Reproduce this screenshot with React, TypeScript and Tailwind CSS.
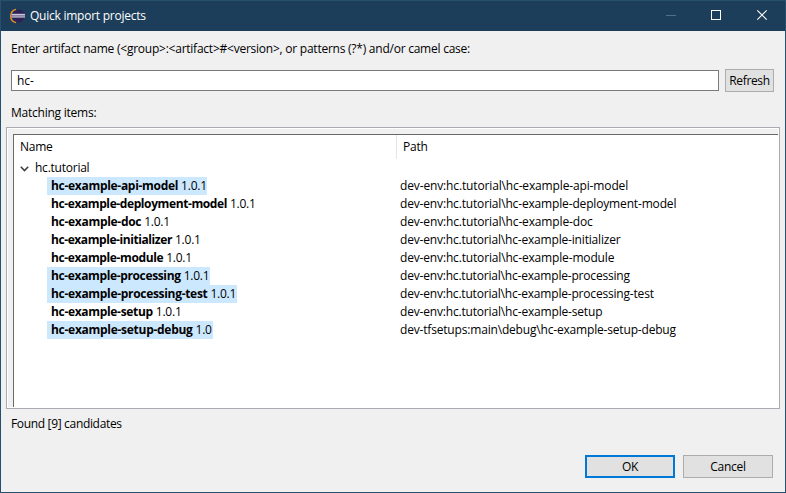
const rows = [
  { name: "hc-example-api-model", version: "1.0.1", path: "dev-env:hc.tutorial\\hc-example-api-model", selected: true, width: "w-[160px]", tracking: "tracking-[-0.3px]", pathTracking: "tracking-[-0.14px]" },
  { name: "hc-example-deployment-model", version: "1.0.1", path: "dev-env:hc.tutorial\\hc-example-deployment-model", selected: false, width: "w-[208px]", tracking: "tracking-[-0.4px]", pathTracking: "tracking-[-0.16px]" },
  { name: "hc-example-doc", version: "1.0.1", path: "dev-env:hc.tutorial\\hc-example-doc", selected: false, width: "w-[122px]", tracking: "tracking-[-0.3px]", pathTracking: "tracking-[-0.15px]" },
  { name: "hc-example-initializer", version: "1.0.1", path: "dev-env:hc.tutorial\\hc-example-initializer", selected: false, width: "w-[153px]", tracking: "tracking-[-0.42px]", pathTracking: "tracking-[-0.18px]" },
  { name: "hc-example-module", version: "1.0.1", path: "dev-env:hc.tutorial\\hc-example-module", selected: false, width: "w-[144px]", tracking: "tracking-[-0.38px]", pathTracking: "tracking-[-0.16px]" },
  { name: "hc-example-processing", version: "1.0.1", path: "dev-env:hc.tutorial\\hc-example-processing", selected: true, width: "w-[163px]", tracking: "tracking-[-0.36px]", pathTracking: "tracking-[-0.19px]" },
  { name: "hc-example-processing-test", version: "1.0.1", path: "dev-env:hc.tutorial\\hc-example-processing-test", selected: true, width: "w-[190px]", tracking: "tracking-[-0.31px]", pathTracking: "tracking-[-0.19px]" },
  { name: "hc-example-setup", version: "1.0.1", path: "dev-env:hc.tutorial\\hc-example-setup", selected: false, width: "w-[133px]", tracking: "tracking-[-0.32px]", pathTracking: "tracking-[-0.18px]" },
  { name: "hc-example-setup-debug", version: "1.0", path: "dev-tfsetups:main\\debug\\hc-example-setup-debug", selected: true, width: "w-[166px]", tracking: "tracking-[-0.28px]", pathTracking: "tracking-[-0.18px]" },
];

function EclipseIcon() {
  return (
    <svg width="16" height="16" viewBox="0 0 16 16" className="mr-[-1px] shrink-0">
      <circle cx="9.3" cy="8" r="6.5" fill="#2c2255" />
      <path d="M7 1.3C3.6 2.2 1.7 4.9 1.7 8S3.6 13.8 7 14.7" fill="none" stroke="#f7941e" strokeWidth="1.3" />
      <rect x="3" y="5.2" width="12.6" height="1" fill="#54497f" />
      <rect x="2.5" y="6" width="13.5" height="1" fill="#c9c6d8" />
      <rect x="2.5" y="7" width="13.5" height="1.5" fill="#8b84a8" />
      <rect x="2.5" y="8.5" width="13.5" height="1" fill="#e1dfe9" />
    </svg>
  );
}

export default function App() {
  return (
    <div className="flex h-[493px] w-[786px] flex-col overflow-hidden whitespace-nowrap border border-[#27506f] bg-[#f0f0f0] font-['Open_Sans','Noto_Sans',sans-serif] text-[12px] leading-[18px] tracking-[-0.24px] text-black">
      <header className="flex h-[30px] shrink-0 items-center bg-[#1c3e5a] pl-2 text-white">
        <EclipseIcon />
        <span className="ml-[6px]">Quick import projects</span>
        <svg width="120" height="30" viewBox="0 0 120 30" className="ml-auto mr-[5px]" fill="none">
          <path d="M6 14.5H16" stroke="#536f84" />
          <rect x="51.5" y="9.5" width="9" height="9" stroke="#fff" />
          <path d="M97.3 9.3L106.7 18.7M106.7 9.3L97.3 18.7" stroke="#fff" strokeWidth="1.1" />
        </svg>
      </header>

      <label className="ml-[10px] mt-[9px] h-[18px]">
        <span>{"Enter artifact name (<group>:<artifact>#<version>, or patterns (?*) and/or camel case:"}</span>
      </label>
      <div className="ml-[10px] mt-[11px] flex h-[23px] gap-[6px]">
        <div className="my-[1px] flex w-[708px] items-center border border-[#7a7a7a] bg-white pl-[5px]">
          <span className="tracking-normal">hc-</span>
        </div>
        <button className="flex w-[49px] items-center justify-center border border-[#adadad] bg-[#e1e1e1] tracking-[-0.35px]">
          <span>Refresh</span>
        </button>
      </div>
      <div className="ml-[10px] mt-[12px] h-[18px]">
        <span>Matching items:</span>
      </div>

      <section className="ml-[5px] mt-[5px] flex h-[282px] w-[774px] shrink-0 flex-col border border-[#a9abb3] bg-white p-px">
        <div className="flex h-[279px] flex-col border-l-[5px] border-t-[5px] border-[#f0f0f0] bg-white">
          <div className="flex h-[273px] flex-1 flex-col border-l border-t border-[#69696b]">
            <div className="flex h-[24px] shrink-0">
              <div className="flex w-[383px] items-center border-r border-[#e5e5e5] pl-[6px]"><span>Name</span></div>
              <div className="flex items-center pl-[6px]"><span>Path</span></div>
            </div>
            <div className="flex h-[18px] pl-[6px]">
              <svg width="9" height="6" viewBox="0 0 9 6" fill="none" className="mr-[6px] mt-[7px]">
                <path d="M0.8 0.8L4.5 4.5L8.2 0.8" stroke="#404040" strokeWidth="1.6" />
              </svg>
              <span>hc.tutorial</span>
            </div>
            {rows.map((r) => (
              <div key={r.path} className="flex h-[18px]">
                <div className="w-[386px] pl-[33px]">
                  <div className={`flex h-[18px] pl-[4px] ${r.width} ${r.selected ? "bg-[#cce8ff]" : ""}`}>
                    <span className={`font-bold ${r.tracking}`}>{r.name}</span>
                    <span className="ml-[3px]">{r.version}</span>
                  </div>
                </div>
                <span className={r.pathTracking}>{r.path}</span>
              </div>
            ))}
          </div>
        </div>
      </section>

      <div className="ml-[10px] mt-[6px] h-[18px] tracking-[-0.33px]"><span>Found [9] candidates</span></div>
      <div className="ml-[584px] mt-[22px] flex gap-[8px]">
        <button className="flex h-[23px] w-[90px] items-center justify-center border-2 border-[#0078d7] bg-[#e1e1e1]"><span>OK</span></button>
        <button className="flex h-[23px] w-[90px] items-center justify-center border border-[#adadad] bg-[#e1e1e1]"><span>Cancel</span></button>
      </div>
    </div>
  );
}
